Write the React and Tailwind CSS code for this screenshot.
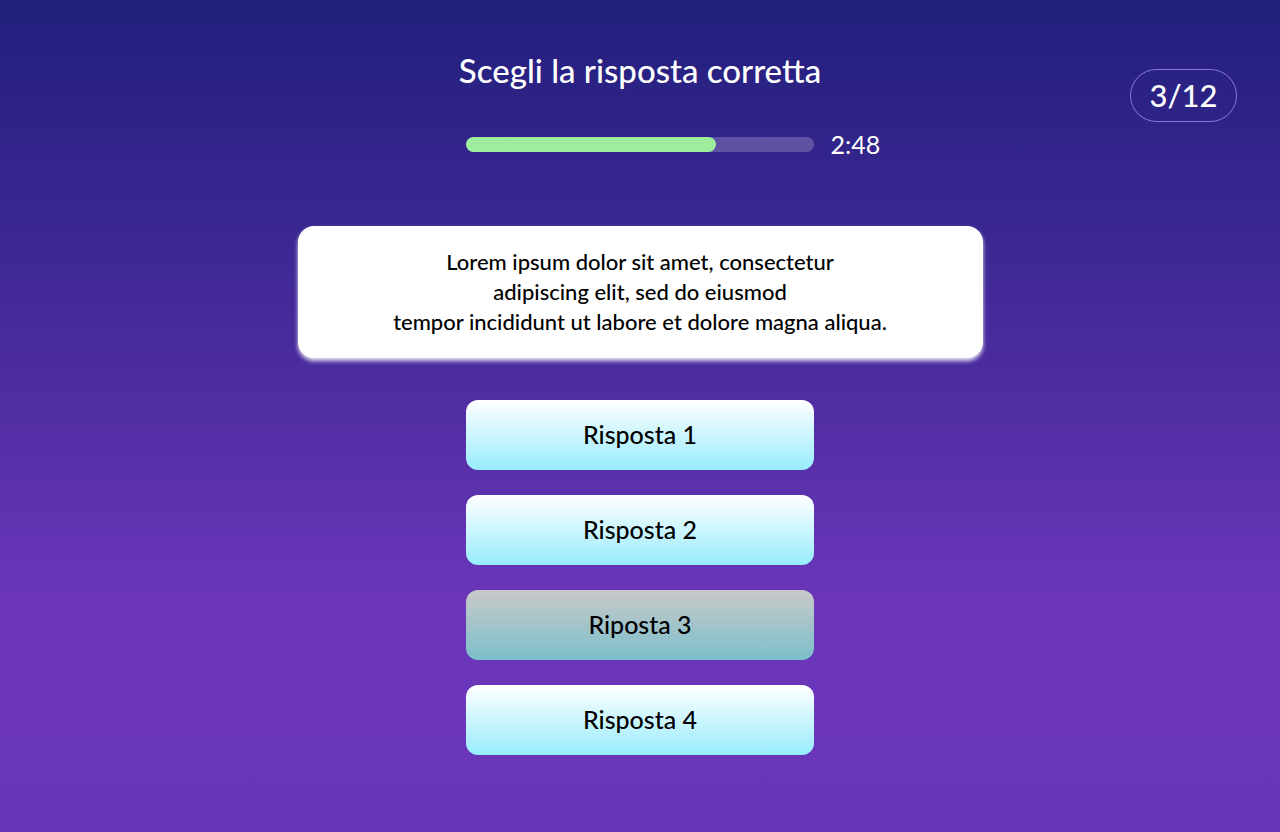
import React from "react";

const answers = [
  { label: "Risposta 1", picked: false },
  { label: "Risposta 2", picked: false },
  { label: "Riposta 3", picked: true },
  { label: "Risposta 4", picked: false },
];

export default function App() {
  return (
    <div
      className="relative min-h-screen w-full bg-[linear-gradient(180deg,#211f7c_0%,#4f2da2_48%,#6b36ba_72%,#6a36b8_100%)] font-['Lato',sans-serif]"
    >
      <div className="absolute right-[43px] top-[69px] flex h-[53px] w-[107px] items-center justify-center rounded-full border border-[#8a7ad8] text-[31px] font-medium text-white">
        3/12
      </div>

      <div className="flex flex-col items-center pt-[48px]">
        <h1 className="text-[33px] leading-[44px] font-medium text-white">
          Scegli la risposta corretta
        </h1>

        <div className="mt-[40px] flex items-center gap-[17px] pl-[66px]">
          <div className="h-[15px] w-[348px] rounded-full bg-[#5f52a3]">
            <div className="h-full w-[72%] rounded-full bg-[#9ded9c]" />
          </div>
          <span className="text-[25px] leading-none text-white">2:48</span>
        </div>

        <div className="mt-[69px] flex h-[132px] w-[685px] flex-col items-center justify-center rounded-[16px] bg-white text-center text-[22px] leading-[30px] font-medium text-black shadow-[0_3px_4px_rgba(255,255,255,0.85)]">
          <p>Lorem ipsum dolor sit amet, consectetur</p>
          <p>adipiscing elit, sed do eiusmod</p>
          <p>tempor incididunt ut labore et dolore magna aliqua.</p>
        </div>

        <div className="mt-[42px] flex flex-col gap-[25px]">
          {answers.map((a) => (
            <button
              key={a.label}
              className={`flex h-[70px] w-[348px] items-center justify-center rounded-[12px] text-[25px] font-medium text-black ${
                a.picked
                  ? "bg-[linear-gradient(180deg,#c9c9c9_0%,#7cbfcb_100%)]"
                  : "bg-[linear-gradient(180deg,#ffffff_0%,#98ecfd_100%)]"
              }`}
            >
              {a.label}
            </button>
          ))}
        </div>
      </div>
    </div>
  );
}
